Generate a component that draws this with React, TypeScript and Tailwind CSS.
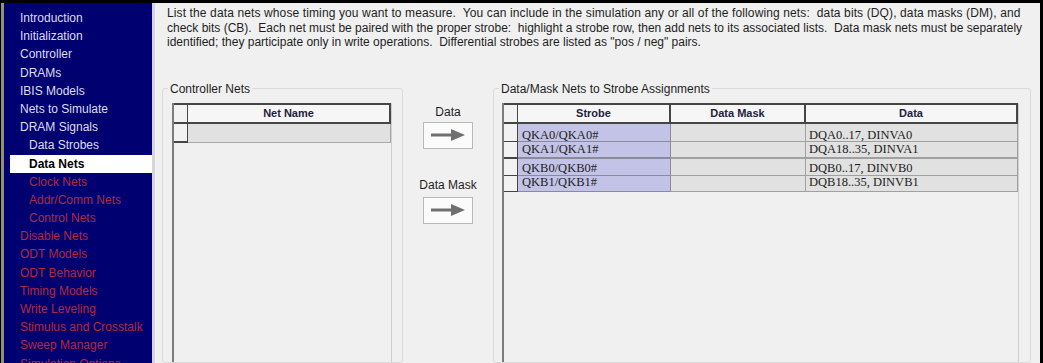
import React from 'react';

type NavItem = { label: string; indent?: boolean; red?: boolean; active?: boolean };

const navItems: NavItem[] = [
  { label: 'Introduction' },
  { label: 'Initialization' },
  { label: 'Controller' },
  { label: 'DRAMs' },
  { label: 'IBIS Models' },
  { label: 'Nets to Simulate' },
  { label: 'DRAM Signals' },
  { label: 'Data Strobes', indent: true },
  { label: 'Data Nets', indent: true, active: true },
  { label: 'Clock Nets', indent: true, red: true },
  { label: 'Addr/Comm Nets', indent: true, red: true },
  { label: 'Control Nets', indent: true, red: true },
  { label: 'Disable Nets', red: true },
  { label: 'ODT Models', red: true },
  { label: 'ODT Behavior', red: true },
  { label: 'Timing Models', red: true },
  { label: 'Write Leveling', red: true },
  { label: 'Stimulus and Crosstalk', red: true },
  { label: 'Sweep Manager', red: true },
  { label: 'Simulation Options', red: true },
];

// row heights and text offsets follow the original grid, which is slightly uneven
const assignments = [
  { strobe: 'QKA0/QKA0#', data: 'DQA0..17, DINVA0', h: 'h-[18px] pt-[5px]', sep: 'border-b' },
  { strobe: 'QKA1/QKA1#', data: 'DQA18..35, DINVA1', h: 'h-[17px] pt-[1px]', sep: 'border-b-2' },
  { strobe: 'QKB0/QKB0#', data: 'DQB0..17, DINVB0', h: 'h-[17px] pt-[3px]', sep: 'border-b' },
  { strobe: 'QKB1/QKB1#', data: 'DQB18..35, DINVB1', h: 'h-[16px] pt-0', sep: 'border-b' },
];

const Arrow = () => (
  <svg width="34" height="14" viewBox="0 0 34 14">
    <line x1="0" y1="7" x2="24" y2="7" stroke="#6f6f6f" strokeWidth="3" />
    <polygon points="20,1 34,7 20,13" fill="#6f6f6f" />
  </svg>
);

const ArrowButton = () => (
  <button className="w-[50px] h-[27px] flex items-center justify-center bg-[#fbfbfb] border border-[#b8b8b8]">
    <Arrow />
  </button>
);

export default function App() {
  return (
    <div className="w-[1043px] h-[363px] overflow-hidden bg-black pt-[3px] pr-[3px] pl-px flex font-['Liberation_Sans',Arial,sans-serif]">
      <div className="w-[3px] shrink-0 bg-[#8e8e8e]" />

      {/* Left navigation */}
      <nav className="w-[148px] shrink-0 bg-[#000070] pt-[6px] text-[12px]">
        {navItems.map((item) =>
          item.active ? (
            <div key={item.label} className="h-[18.2px] ml-[6px] pl-[19px] bg-white text-black font-bold leading-[18.2px]">
              {item.label}
            </div>
          ) : (
            <div
              key={item.label}
              className={`h-[18.2px] leading-[18.2px] whitespace-nowrap ${item.indent ? 'pl-[25px]' : 'pl-[16px]'} ${item.red ? 'text-[#b3283e]' : 'text-[#dcdcee]'}`}
            >
              {item.label}
            </div>
          )
        )}
      </nav>
      <div className="w-[3px] shrink-0 bg-[#d6d6d6]" />

      <main className="flex-1 bg-[#f0f0f0] flex flex-col overflow-hidden text-[#1e1e1e]">
        <div className="pl-[12px] pt-[3px] text-[12px] leading-[14.5px] whitespace-pre">
          <p className="tracking-[0.12px]">
            List the data nets whose timing you want to measure.  You can include in the simulation any or all of the following nets:  data bits (DQ), data masks (DM), and
          </p>
          <p>
            check bits (CB).  Each net must be paired with the proper strobe:  highlight a strobe row, then add nets to its associated lists.  Data mask nets must be separately
          </p>
          <p>identified; they participate only in write operations.  Differential strobes are listed as "pos / neg" pairs.</p>
        </div>

        <div className="flex mt-[32px] ml-[7px] h-[320px] text-[12px]">
          {/* Controller Nets */}
          <fieldset className="w-[241px] shrink-0 border border-[#dadada] rounded-[3px] pl-[9px] pr-[10px] flex flex-col">
            <legend className="-ml-[4px] px-[2px] leading-[14px]">Controller Nets</legend>
            <div className="mt-[7px] flex-1 border-l-2 border-[#7c7c7c] border-r border-r-[#cfcfcf]">
              <div className="flex h-[21px] border-y-2 border-[#454545]">
                <div className="w-[14px] border-r border-[#454545] bg-[#f2f2f2]" />
                <div className="flex-1 bg-[#f6f6f6] text-[11px] font-bold text-[#22223e] flex items-center justify-center border-r-2 border-[#454545]">
                  Net Name
                </div>
              </div>
              <div className="flex h-[19px]">
                <div className="w-[14px] border-r border-b-2 border-[#454545] bg-[#f2f2f2]" />
                <div className="flex-1 bg-[#e1e1e1] border-b border-r border-[#a8a8a8]" />
              </div>
            </div>
          </fieldset>

          {/* Transfer buttons */}
          <div className="w-[90px] shrink-0 flex flex-col items-center pt-[23px]">
            <span className="leading-[14px]">Data</span>
            <div className="mt-[3px]">
              <ArrowButton />
            </div>
            <span className="mt-[29px] leading-[14px]">Data Mask</span>
            <div className="mt-[5px]">
              <ArrowButton />
            </div>
          </div>

          {/* Strobe assignments */}
          <fieldset className="w-[538px] shrink-0 border border-[#dadada] rounded-[3px] pl-[8px] pr-[11px] flex flex-col">
            <legend className="-ml-[3px] px-[2px] leading-[14px]">Data/Mask Nets to Strobe Assignments</legend>
            <div className="mt-[7px] flex-1 border-l-2 border-[#7c7c7c] border-r border-r-[#cfcfcf]">
              <div className="flex h-[21px] border-y-2 border-[#454545] text-[11px] font-bold text-[#22223e] bg-[#f6f6f6]">
                <div className="w-[14px] border-r border-[#454545] bg-[#f2f2f2]" />
                <div className="w-[153px] flex items-center justify-center border-r-2 border-[#454545]">Strobe</div>
                <div className="w-[135px] flex items-center justify-center border-r-2 border-[#454545]">Data Mask</div>
                <div className="flex-1 flex items-center justify-center border-r-2 border-[#454545]">Data</div>
              </div>
              {assignments.map((row) => (
                <div key={row.strobe} className="flex font-['Liberation_Serif','Times_New_Roman',serif] text-[12.5px] leading-none">
                  <div className={`w-[14px] ${row.h} border-r ${row.sep} border-[#454545] bg-[#f2f2f2]`} />
                  <div className={`w-[153px] ${row.h} bg-[#c3c3e7] ${row.sep} border-r border-[#8a8a9c] pl-[4px]`}>
                    {row.strobe}
                  </div>
                  <div className={`w-[135px] ${row.h} bg-[#e1e1e1] ${row.sep} border-r border-[#a0a0a0]`} />
                  <div className={`flex-1 ${row.h} bg-[#e1e1e1] ${row.sep} border-r border-[#a0a0a0] pl-[3px]`}>
                    {row.data}
                  </div>
                </div>
              ))}
            </div>
          </fieldset>
        </div>
      </main>
    </div>
  );
}
